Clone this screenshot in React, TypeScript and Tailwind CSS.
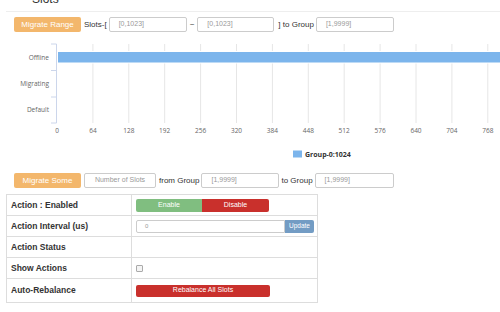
import React from 'react';

const ticks = [0, 64, 128, 192, 256, 320, 384, 448, 512, 576, 640, 704, 768];
const x0 = 57;
const step = 35.9;

function SlotInput({ placeholder, w }: { placeholder: string; w: string }) {
  return (
    <div
      className={`${w} flex h-[15px] items-center rounded-[2px] border border-[#cccccc] bg-white px-[9px] text-[7px] text-[#999999]`}
    >
      {placeholder}
    </div>
  );
}

function SlotsChart() {
  return (
    <svg width={500} height={128} className="block" style={{ fontFamily: '"Open Sans", "Noto Sans", sans-serif' }}>
      {ticks.map((t, i) => {
        const x = x0 + i * step;
        return (
          <g key={t}>
            {i > 0 && <line x1={x} y1={8} x2={x} y2={87} stroke="#e6e6e6" strokeWidth={1} />}
            <text x={x} y={96.5} fontSize={6.5} fill="#666666" textAnchor="middle">
              {t}
            </text>
          </g>
        );
      })}
      <line x1={56.5} y1={8} x2={56.5} y2={87} stroke="#ccd6eb" strokeWidth={1} />
      {[8, 34.5, 61, 87].map((y) => (
        <line key={y} x1={51} y1={y} x2={56.5} y2={y} stroke="#ccd6eb" strokeWidth={1} />
      ))}
      <rect x={57.5} y={15.5} width={460} height={11.5} fill="#7cb5ec" stroke="#ffffff" strokeWidth={1} />
      <text x={49} y={23.5} fontSize={6.5} fill="#666666" textAnchor="end">Offline</text>
      <text x={49} y={49.5} fontSize={6.5} fill="#666666" textAnchor="end">Migrating</text>
      <text x={49} y={75.5} fontSize={6.5} fill="#666666" textAnchor="end">Default</text>
      <rect x={293} y={114.5} width={9} height={7} fill="#7cb5ec" />
      <text x={305} y={121} fontSize={7} fontWeight="bold" fill="#333333">Group-0:1024</text>
    </svg>
  );
}

function Row({ label, children, last }: { label: string; children?: React.ReactNode; last?: boolean }) {
  return (
    <div className={`flex ${last ? 'h-[23px]' : 'h-[21px] border-b border-[#dddddd]'}`}>
      <div className="flex w-[125px] items-center border-r border-[#dddddd] pl-[4px] text-[8.5px] font-bold text-[#333333]">
        {label}
      </div>
      <div className="flex flex-1 items-center pl-[4px]">{children}</div>
    </div>
  );
}

export default function App() {
  return (
    <div
      className="h-[312px] w-[500px] overflow-hidden bg-white text-[#333333]"
      style={{ fontFamily: '"Liberation Sans", Arial, sans-serif' }}
    >
      <div className="h-[11px] overflow-hidden pl-[32px]">
        <div className="mt-[-8px] text-[12px] leading-[14px] text-[#333333]">Slots</div>
      </div>
      <div className="ml-[6px] border-t border-[#eeeeee]" />

      <div className="mt-[5px] flex items-center pl-[14px] text-[8px]">
        <div className="flex h-[15px] w-[67px] items-center justify-center rounded-[2px] bg-[#f3b76c] text-white">
          Migrate Range
        </div>
        <span className="ml-[3px] mr-[2px]">Slots-[</span>
        <SlotInput placeholder="[0,1023]" w="w-[78px]" />
        <span className="mx-[3px]">~</span>
        <SlotInput placeholder="[0,1023]" w="w-[77px]" />
        <span className="ml-[4px] mr-[2px]">] to Group</span>
        <SlotInput placeholder="[1,9999]" w="w-[78px]" />
      </div>

      <div className="mt-[4px]">
        <SlotsChart />
      </div>

      <div className="mt-[9px] flex items-center pl-[14px] text-[8px]">
        <div className="flex h-[15px] w-[67px] items-center justify-center rounded-[2px] bg-[#f3b76c] text-white">
          Migrate Some
        </div>
        <div className="ml-[3px] flex h-[15px] w-[72px] items-center justify-center rounded-[2px] border border-[#cccccc] text-[7px] text-[#999999]">
          Number of Slots
        </div>
        <span className="ml-[3px] mr-[2px]">from Group</span>
        <SlotInput placeholder="[1,9999]" w="w-[78px]" />
        <span className="ml-[2px] mr-[2px]">to Group</span>
        <SlotInput placeholder="[1,9999]" w="w-[79px]" />
      </div>

      <div className="ml-[6px] mt-[6px] w-[312px] border border-[#dddddd]">
        <Row label="Action : Enabled">
          <div className="flex h-[13px] w-[66px] items-center justify-center rounded-l-[2px] bg-[#80be80] text-[7px] text-white">
            Enable
          </div>
          <div className="flex h-[13px] w-[67px] items-center justify-center rounded-r-[2px] bg-[#c9302c] text-[7px] text-white">
            Disable
          </div>
        </Row>
        <Row label="Action Interval (us)">
          <div className="flex h-[13px] w-[149px] items-center rounded-l-[2px] border border-[#cccccc] pl-[8px] text-[6px] text-[#999999]">
            0
          </div>
          <div className="flex h-[13px] w-[29px] items-center justify-center rounded-r-[2px] bg-[#739cc4] text-[6.5px] text-white">
            Update
          </div>
        </Row>
        <Row label="Action Status" />
        <Row label="Show Actions">
          <div className="h-[7px] w-[7px] rounded-[1px] border border-[#aaaaaa] bg-[#f4f4f4]" />
        </Row>
        <Row label="Auto-Rebalance" last>
          <div className="flex h-[12px] w-[134px] items-center justify-center rounded-[2px] bg-[#c9302c] text-[7px] text-white">
            Rebalance All Slots
          </div>
        </Row>
      </div>
    </div>
  );
}
